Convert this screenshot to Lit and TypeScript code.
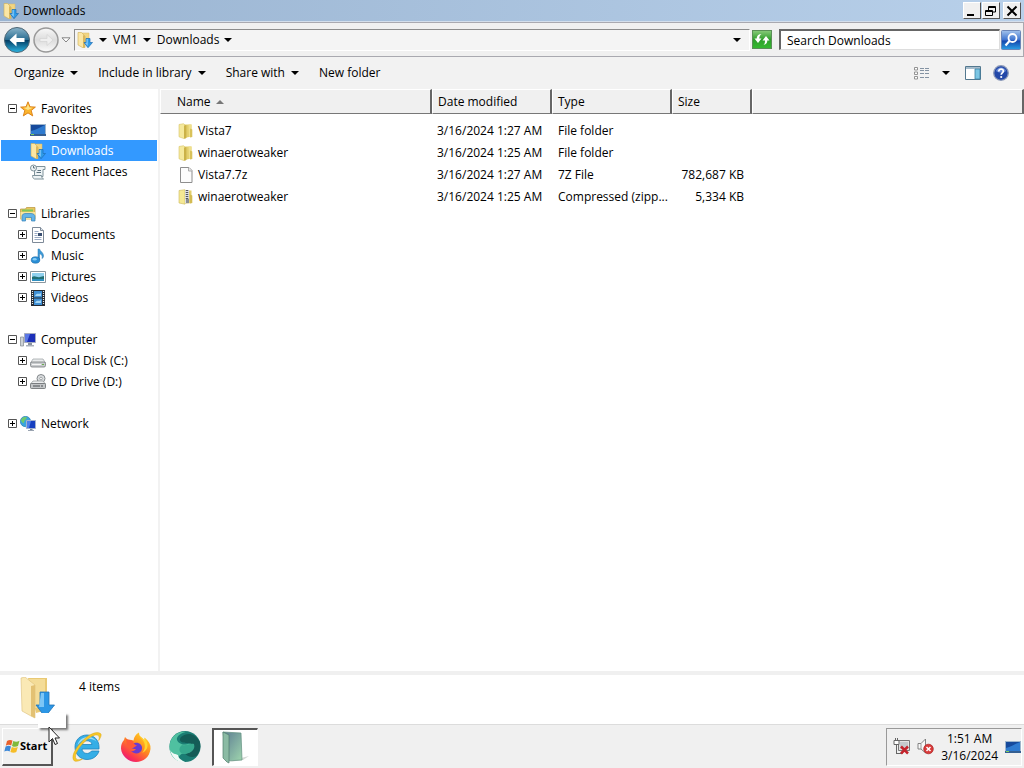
import { LitElement, html, css, svg, nothing } from "lit";
import { customElement, property } from "lit/decorators.js";
import { classMap } from "lit/directives/class-map.js";

const icons: Record<string, [number, number, unknown]> = {
  downloads: [16, 16, svg`
    <path d="M5 1h7v10H6z" fill="#f1d582" stroke="#d8b964" stroke-width=".5"/>
    <path d="M1 .5h3.500L8 4v11.500l-2 .3-5-2.800z" fill="#fbe6a4" stroke="#cfae55" stroke-width=".6"/>
    <path d="M6 3l2 1v11.500l-2 .3z" fill="#dbb75b"/>
    <path d="M9 6.500h4v4h2.500L11 15.700 7 10.500h2z" fill="#2f9be8" stroke="#1c6fb5" stroke-width=".7"/><path d="M9.500 7h1.300v7L8 11h1.500z" fill="#82c7f5"/>`],
  bigDownloads: [40, 44, svg`
    <path d="M8 1h19v32l-11 3z" fill="#e9c974"/><path d="M9 2h16v29H14z" fill="#f4dc97"/>
    <path d="M1 1l4-1 10 8v33l-4-2L2 34z" fill="#fae9b5" stroke="#dcc07a" stroke-width=".6"/>
    <path d="M11 9l4-1v33l-4-2z" fill="#e3c173"/>
    <path d="M20 15h9v13h5.500L25 40l-9-12h4z" fill="#2c97e6" stroke="#2473b5" stroke-width=".8"/>
    <path d="M21 16h3v14h-5z" fill="#7cc6f6"/>`],
  star: [16, 16, svg`<path d="M8 .8l2 5 5.400.300-4.200 3.400 1.500 5.400L8 11.900l-4.700 3 1.500-5.400L.6 6.100 6 5.800z" fill="#fbb52e" stroke="#d97c12" stroke-width=".9"/><path d="M8 3l1.300 3.500 3.500.2L8 9 3.500 6.700l3.200-.2z" fill="#fde48a"/>`],
  desktop: [16, 16, svg`<path d="M0 2h16v12H0z" fill="#9fb6cc"/><path d="M1 3h14v9H1z" fill="#164a9c"/><path d="M1 9c5-1 9-4 14-6v9H1z" fill="#2f7bd0"/><path d="M0 12h16v2H0z" fill="#355f92"/><path d="M1 12h3v1H1z" fill="#7fd25b"/>`],
  recent: [16, 16, svg`<g stroke="#7f929a" fill="#eef3f5"><path d="M4.500 2.500h10.500v3h-2v7h-8.500z"/><path d="M2.500 11.500h9c0 2 1 3 2 3.500h-9c-1.500-.5-2-2-2-3.500z"/><circle cx="3.500" cy="4" r="3"/></g><path d="M3.500 2v2H5M7.500 6.500H11M6.500 8.500H11" stroke="#5e7480" fill="none"/>`],
  libraries: [16, 16, svg`<path d="M.5 3h5l1-1.500h8.500V13H.5z" fill="#e8c75e" stroke="#b8943a" stroke-width=".7"/><path d="M2 3.500h11v2H2z" fill="#7fc65c"/><path d="M.5 6h15v7.500H.5z" fill="#f9e49c"/><path d="M2 15v-4.500C2 8 4 7.500 6 7.500h5c2 0 4 1 4 3V15h-3.500v-3.500h-6V15z" fill="#63b4e8" stroke="#3581b8" stroke-width=".7"/>`],
  document: [16, 16, svg`<path d="M2.500.5h8l3 3v12h-11z" fill="#fff" stroke="#7e8a98"/><path d="M10.500.5v3h3" fill="#dde4ec" stroke="#7e8a98"/><path d="M4.500 4.500h4M4.500 6.500h3M4.500 8.500h3M4.500 10.500h7M4.500 12.500h7" stroke="#9aabc4"/><path d="M8 6h4v3H8z" fill="#3a4f72"/>`],
  music: [16, 16, svg`<path d="M8 1h1.500c.5 2.500 4.500 3.500 4 7.500-.3 1-1 2-1.500 2 .8-2.500-.5-4-2.500-5V12H8z" fill="#3c9bd8" stroke="#2a74ac" stroke-width=".5"/><ellipse cx="5.500" cy="12" rx="4.300" ry="3.200" fill="#2a8fd6" stroke="#1b69a6" stroke-width=".6"/><ellipse cx="4.700" cy="11.200" rx="2" ry="1.200" fill="#85ccf5"/>`],
  picture: [16, 16, svg`<path d="M.5 2.500h15v11H.5z" fill="#fff" stroke="#8a979f"/><path d="M2 4h12v8H2z" fill="#8fd0ee"/><path d="M2 8c3-2 5 1 8 0l4-1v5H2z" fill="#1f6f74"/><path d="M2 10h12v2H2z" fill="#2f8fbf"/>`],
  video: [16, 16, svg`<path d="M1 0h14v16H1z" fill="#252b33"/><path d="M4 1h8v6.500H4zM4 8.500h8V15H4z" fill="#3f8fd4"/><path d="M5 6c2-4 3-1 6-3v3zM5 13c2-4 3-1 6-3v3z" fill="#a5d7f5"/><path d="M2.500 1v14M13.500 1v14" stroke="#e8edf2" stroke-width="1.200" stroke-dasharray="1 1"/>`],
  computer: [16, 16, svg`<path d="M.5 5h3v9h-3z" fill="#cdd2d6" stroke="#81898f" stroke-width=".7"/><path d="M4.500 1.500h11v9h-11z" fill="#1c2fb8" stroke="#a4abc0"/><path d="M5 2h5L7 10H5z" fill="#5b78e6"/><path d="M8 11h4v2H8z" fill="#8b93a0"/><path d="M6 13h8v1.500H6z" fill="#aab1bb"/>`],
  disk: [16, 16, svg`<path d="M3 6h10l2.500 4H.5z" fill="#e9ebec" stroke="#9a9ea1" stroke-width=".7"/><rect x=".5" y="9" width="15" height="5" rx="1.500" fill="#c8cbcd" stroke="#75797c" stroke-width=".8"/><path d="M2 11.500h9" stroke="#f6f6f6"/><path d="M12 11h2v1h-2z" fill="#69ad4d"/>`],
  cd: [16, 16, svg`<circle cx="11" cy="4.500" r="4" fill="#dadddf" stroke="#83888b"/><circle cx="11" cy="4.500" r="1.300" fill="#fff" stroke="#83888b" stroke-width=".7"/><path d="M3 7h10l2.500 3H.5z" fill="#eceeef" stroke="#8c9093" stroke-width=".7"/><rect x=".5" y="9.500" width="15" height="5" rx="1" fill="#c3c6c8" stroke="#66696c" stroke-width=".8"/><path d="M3 12h7M11 12h2" stroke="#4d5154"/>`],
  network: [16, 16, svg`<circle cx="5.500" cy="5.500" r="5.200" fill="#3ba4dc" stroke="#2176a9" stroke-width=".6"/><path d="M1 4c2-4 5-3 6-2.500C6 4 4 4 4 7 2.500 7 1.500 6 1 4z" fill="#6fcb6b"/><path d="M6.500 4.500h9v8h-9z" fill="#163fc0" stroke="#a4b1cf"/><path d="M7 5h4l-2 7H7z" fill="#4d7eea"/><path d="M10 13h2.500v2H10z" fill="#7c8796"/><path d="M8 14.500h6" stroke="#9aa4b1"/>`],
  folder: [16, 16, svg`<path d="M5 1.500h8.500v12L6 15z" fill="#e3cf6c"/><path d="M10.500 1.500h3v12l-2.500.5z" fill="#efe08c"/><path d="M1 1.500l4.500-.8L8 3v12l-2 .6-5-1.800z" fill="#f5e99c" stroke="#d6c468" stroke-width=".6"/><path d="M6 2.500L8.300 2v13L6 15.500z" fill="#cbb248"/><path d="M12 5.500l2.300 1v7.500L12 14.500z" fill="#d9c25a"/>`],
  file: [16, 16, svg`<path d="M2.500.5h8.500l3 3v12h-11.500z" fill="#fcfcfc" stroke="#8e8e8e"/><path d="M10.500.5v3.500h3.500" fill="#e8e8e8" stroke="#9c9c9c" stroke-width=".8"/>`],
  zip: [16, 16, svg`<path d="M6 1.500h7.500V14L7 15z" fill="#e3cf6c"/><path d="M1 1.500l6-.8v14.500l-6-1.200z" fill="#f5e994" stroke="#cdb95a" stroke-width=".6"/><path d="M7 1h4v13.500H7z" fill="#dedfe2"/><path d="M9 1v9" stroke="#55585e" stroke-width="2.500" stroke-dasharray="1 1"/><path d="M8 10h3v4H8z" fill="#8a8d92"/><path d="M12 5.500l2.300 1v7.500L12 14.500z" fill="#d3bb52"/>`],
  back: [28, 28, svg`<defs><linearGradient id="b" x1="0" y1="0" x2="0" y2="1"><stop offset="0" stop-color="#8ab4ca"/><stop offset=".48" stop-color="#2b6e92"/><stop offset=".52" stop-color="#053f66"/><stop offset="1" stop-color="#2bb6e4"/></linearGradient></defs><circle cx="14" cy="14" r="12.500" fill="url(#b)" stroke="#4d6675"/><path d="M6.500 14l7-6.500v4.500h8v4h-8v4.500z" fill="#fff"/>`],
  forward: [28, 28, svg`<defs><linearGradient id="f" x1="0" y1="0" x2="0" y2="1"><stop offset="0" stop-color="#f8f8f8"/><stop offset=".5" stop-color="#dcdcdc"/><stop offset="1" stop-color="#fbfbfb"/></linearGradient></defs><circle cx="14" cy="14" r="12" fill="url(#f)" stroke="#999" stroke-width="1.500"/><path d="M21 14l-6-5.500v4H8v3h7v4z" fill="#efefef" stroke="#d2d2d2" stroke-width=".7"/>`],
  chevron: [10, 6, svg`<path d="M1 .8h8L5 5z" fill="#fff" stroke="#777" stroke-width=".9"/>`],
  refresh: [20, 19, svg`<defs><linearGradient id="r" x1="0" y1="0" x2="0" y2="1"><stop offset="0" stop-color="#8acb7c"/><stop offset=".5" stop-color="#2f9e2c"/><stop offset="1" stop-color="#35bb30"/></linearGradient></defs><rect x=".5" y=".5" width="19" height="18" fill="url(#r)" stroke="#5b8f58"/><path d="M2.500 8.500L6 13l3.500-4.500H7.300C7.300 6.500 8 5 9.500 4 6.500 4 4.700 6 4.700 8.500z" fill="#fff"/><path d="M10.500 10.500L14 6l3.500 4.500h-2.200c0 2-.8 4-3.800 4.500 1.200-1 1.500-2.500 1.500-4.500z" fill="#fff"/>`],
  search: [20, 20, svg`<defs><linearGradient id="s" x1="0" y1="0" x2="0" y2="1"><stop offset="0" stop-color="#a4c4ec"/><stop offset=".5" stop-color="#3b72cf"/><stop offset=".55" stop-color="#1646ad"/><stop offset="1" stop-color="#2ba0e6"/></linearGradient></defs><rect x=".5" y=".5" width="19" height="19" rx="1" fill="url(#s)" stroke="#6b86b8"/><circle cx="11.500" cy="8" r="4" fill="none" stroke="#fff" stroke-width="1.800"/><path d="M8.500 11L4.500 15.500" stroke="#fff" stroke-width="2.200"/>`],
  views: [16, 13, svg`<path d="M.5.5h3v2.500h-3zM.5 5h3v2.500h-3zM.5 9.500h3V12h-3z" fill="#fff" stroke="#888" stroke-width=".9"/><path d="M6 1.500h10M6 3.500h10M6 6.500h10M6 10.500h10" stroke="#8493a3" stroke-dasharray="4 1"/>`],
  preview: [16, 14, svg`<path d="M.5.5h15v13H.5z" fill="#fff" stroke="#54788f"/><path d="M1 2h14" stroke="#a6bccb" stroke-width="2"/><path d="M10 3h5v10h-5z" fill="#7cc6e4" stroke="#3b82a3" stroke-width=".8"/>`],
  help: [16, 16, svg`<circle cx="8" cy="8" r="7.300" fill="#2348a8" stroke="#8b99b8" stroke-width="1.300"/><path d="M3 6a5.300 5.300 0 0 1 10 0c-3 2-7 2-10 0z" fill="#6a8cd8"/><path d="M5.800 6.500C5.800 3.200 10.600 3.500 10.300 6.300 10.100 7.800 8.200 7.900 8.200 9.700" fill="none" stroke="#fff" stroke-width="1.700"/><circle cx="8.200" cy="12" r="1.100" fill="#fff"/>`],
  flag: [16, 16, svg`<path d="M3 3c2-1.500 4-1.300 5.500-.4L7.200 7.500C5.700 6.500 3.700 6.500 1.800 7.700z" fill="#e8612c"/><path d="M9.300 3c2 1.200 4.200 1 6.200-.2L14 8c-1.900 1-4 1-6-.1z" fill="#80b93c"/><path d="M1.600 8.600c1.800-1.200 3.800-1.200 5.400-.2l-1.400 5c-1.500-1-3.500-1-5.300.2z" fill="#3d89d8"/><path d="M7.800 8.900c2 1 4 1 6 0l-1.500 5.200c-1.800 1-4 .9-5.900-.1z" fill="#f6bd28"/>`],
  ie: [32, 32, svg`<path fill-rule="evenodd" d="M16 4c7 0 12 5 12 12v2H11c.3 5 7 6 9.500 2H28c-1.500 5-6 8.500-12 8.500C9 28.500 4 23 4 16S9 4 16 4zM11 13.500h10c-.5-5-9.500-5-10 0z" fill="#35aee6" stroke="#1f84bd" stroke-width=".8"/><path d="M6.500 14C8 8 13 6 17 6c4 0 7 2 8.500 4.500C20 6 12 7 6.500 14z" fill="#9cdcf7"/><path d="M29.500 2.500c-4-2.500-11 .5-17 6.500C6 15 0 24 2.500 29c1.500 2.500 6 1 9-1-4 1.500-6.500.8-7-1.500-.6-4 4-11 9.500-16 5-5 10.500-7.500 13-6.200 1.500.8 1.500 2.700.7 5.200 2-3 3.300-6 1.800-7z" fill="#f7c828" stroke="#d9a312" stroke-width=".5"/>`],
  firefox: [32, 32, svg`<defs><linearGradient id="x" x1=".9" y1="0" x2=".2" y2="1"><stop offset="0" stop-color="#ffe226"/><stop offset=".45" stop-color="#ff8c1f"/><stop offset=".8" stop-color="#fb3550"/><stop offset="1" stop-color="#e31587"/></linearGradient></defs><path d="M4 9l1-3 3 3c2-.5 4 0 5.500.5C14 6 15.500 3.500 19 1.500c0 3 1 4 3 5.500 1.500 1 2 2 2.500 3V6.500C29 10 31 14 30.500 18 29.500 26 23.500 31 16 31S1.500 25 1 17.500C.9 14 2 11 4 9z" fill="url(#x)"/><path d="M12 13.500c4-4 11-1 10 4.500-1 5-7.500 6-11 2 2 .5 4-.5 5-2-3 .5-5-1-6.500-2.500z" fill="#6a3bd0"/><path d="M6 8c3 1 5 1 7.500 2.500-.5 2 1.500 3.500 3.500 4l-4 2.500c-3 1-4 0-6-2z" fill="#ff5a38"/><path d="M19 2c0 4 3 5 5 9 2 5 0 9-2 11 7-3 7-10 2.500-15v3C23 6 19 6 19 2z" fill="#ffd62e"/>`],
  edge: [34, 34, svg`<circle cx="17" cy="16.500" r="15.500" fill="#1b7d74"/><path d="M13 7c6-5 14-4 18.500 4 2 5 .5 11-3 15-4 2-9 1-12-3 5 0 9-3 8-8-2-3-8-1-11-3-2-1-2-3-.5-5z" fill="#145c57"/><path d="M9 10c-1-3 3-7 9-8C9 .5 1.500 8 1.500 17c0 7 4 12 9 14-1-3 0-5 3-7 7 0 13-3 12-9-4-3-8 1-12-1-2-1-4-2-4.500-4z" fill="#4fc0a0"/><path d="M14 15c5 1 8-2 12-1 2 6-4 10-11 10-4-1-5-6-1-9z" fill="#36a88e"/><path d="M2 20c2 4 6 4 8 5 0 3 3 5 8 7.500C10 33 4 28 2 20z" fill="#f1faf7"/>`],
  explorer: [28, 34, svg`<defs><linearGradient id="e" x1="0" y1="0" x2="1" y2="1"><stop offset="0" stop-color="#5c7c92"/><stop offset="1" stop-color="#9fd5ae"/></linearGradient></defs><path d="M20 28l8-2-6 4-14 2z" fill="#d5dbd6"/><path d="M2 2l18 1 1 27-16 1z" fill="url(#e)" stroke="#62917f" stroke-width=".7"/><path d="M2 2l6 3v28l-2-1-4-4z" fill="#8bbba4" stroke="#52806f" stroke-width=".7"/>`],
  netError: [17, 17, svg`<path d="M5.500 2.500h11v10h-11z" fill="#e4e4e4" stroke="#777"/><path d="M7 4h8v7H7z" fill="#c5cacd"/><path d="M1 2.500h5v4H1zM2.500 0v3M4.500 0v3M3.500 7v9M3.500 15.500h6" stroke="#666" fill="#fff"/><path d="M8 8.500l7 7M15 8.500l-7 7" stroke="#c4232c" stroke-width="2.500"/>`],
  muted: [17, 17, svg`<path d="M1 5.500h3l4.500-4.500v14L4 11H1z" fill="#f8f8f8" stroke="#777" stroke-width=".9"/><path d="M4 5.500V11" stroke="#999"/><circle cx="11.500" cy="11" r="4.800" fill="#d83a3a" stroke="#a82424" stroke-width=".7"/><path d="M9.500 9l4 4M13.500 9l-4 4" stroke="#fff" stroke-width="1.500"/>`],
  pointer: [12, 20, svg`<path d="M1 1v15l3.500-3.500L7 18.500l2.500-1L7 12h4.500z" fill="#fff" stroke="#222"/>`],
  minimize: [12, 12, svg`<path d="M1 9h7v2H1z"/>`],
  restore: [12, 12, svg`<path fill="none" stroke="#000" d="M3.500 5V1.500h7V7H8M3 2.500h8M.5 5.500h7v5h-7zM0 6.500h8"/>`],
  close: [12, 12, svg`<path d="M1.500 1.500l9 9M10.500 1.500l-9 9" stroke="#000" stroke-width="2"/>`],
};

function icon(name: string) {
  const [w, h, body] = icons[name];
  return html`<svg width=${w} height=${h} viewBox="0 0 ${w} ${h}" aria-hidden="true">${body}</svg>`;
}

const shared = css`
  * { box-sizing: border-box; }
  svg { display: block; flex: none; }
  button { font: inherit; color: inherit; background: none; border: 0; padding: 0; display: flex; align-items: center; }
  a { color: inherit; text-decoration: none; }
  .caret { flex: none; width: 0; height: 0; border: 4px solid transparent; border-top-color: #000; border-bottom: 0; }
`;

@customElement("title-bar")
class TitleBar extends LitElement {
  static styles = [shared, css`
    :host { display: flex; align-items: center; height: 22px; padding: 0 3px; background: linear-gradient(90deg, #9ab4d1, #b8d0ea); border-bottom: 1px solid #d4dfec; }
    .name { flex: 1; margin-left: 4px; }
    .box { width: 18px; height: 17px; justify-content: center; background: #f0f0f0; border: 1px solid; border-color: #fff #555 #555 #fff; margin-left: 1px; }
    .last { margin-left: 3px; }
  `];
  render() {
    return html`${icon("downloads")}<span class="name">Downloads</span>
      <button class="box" aria-label="Minimize">${icon("minimize")}</button>
      <button class="box" aria-label="Restore">${icon("restore")}</button>
      <button class="box last" aria-label="Close">${icon("close")}</button>`;
  }
}

@customElement("nav-bar")
class NavBar extends LitElement {
  static styles = [shared, css`
    :host { display: flex; align-items: center; height: 35px; padding: 0 2px 0 3px; border: 1px solid #a9a9b0; border-width: 1px 1px 1px 0; background: #f0f0f0; }
    .round { margin-right: 1px; }
    .address { display: flex; align-items: center; flex: 1; height: 22px; gap: 6px; margin-left: 3px; padding: 0 8px 0 2px; border: 1px solid #8c8c8c; border-color: #8c8c8c #fff #fff #8c8c8c; background: #f4f4f4; }
    .grow { flex: 1; }
    .refresh { margin: 0 7px 0 2px; }
    .query { width: 221px; height: 21px; padding: 0 6px; margin-right: 1px; font: inherit; color: #000; background: #fff; border: 1px solid; border-color: #666 #ddd #ddd #666; border-width: 2px 1px 1px 2px; border-radius: 0; outline: 0; }
    .query::placeholder { color: #000; opacity: 1; }
    .crumb { display: flex; align-items: center; gap: 5px; }
  `];
  render() {
    return html`
      <button class="round" aria-label="Back">${icon("back")}</button>
      <button class="round" aria-label="Forward">${icon("forward")}</button>
      <button aria-label="Recent pages">${icon("chevron")}</button>
      <div class="address">${icon("downloads")}
        <span class="crumb"><span class="caret"></span></span>
        <a class="crumb" href="#vm1">VM1 <span class="caret"></span></a>
        <a class="crumb" href="#downloads">Downloads <span class="caret"></span></a>
        <span class="grow"></span>
        <button aria-label="Previous locations"><span class="caret"></span></button>
      </div>
      <button class="refresh" aria-label="Refresh">${icon("refresh")}</button>
      <input class="query" type="search" aria-label="Search Downloads" placeholder="Search Downloads">
      <button aria-label="Search">${icon("search")}</button>`;
  }
}

@customElement("command-bar")
class CommandBar extends LitElement {
  static styles = [shared, css`
    :host { display: flex; align-items: center; height: 32px; padding: 0 15px 0 14px; background: #f2f2f2; gap: 20px; }
    .menu { gap: 6px; }
    .grow { flex: 1; }
    .tools { display: flex; align-items: center; gap: 12px; }
    .more { margin-right: 3px; }
  `];
  render() {
    return html`
      ${["Organize", "Include in library", "Share with"].map((t) => html`<button class="menu">${t}<span class="caret"></span></button>`)}
      <button>New folder</button><span class="grow"></span>
      <div class="tools">
        <button aria-label="Change view">${icon("views")}</button>
        <button class="more" aria-label="More views"><span class="caret"></span></button>
        <button aria-label="Preview pane">${icon("preview")}</button>
        <button aria-label="Help">${icon("help")}</button>
      </div>`;
  }
}

interface Node { label: string; icon: string; mark?: "plus" | "minus"; active?: boolean; children?: Node[]; }
const tree: Node[] = [
  { label: "Favorites", icon: "star", mark: "minus", children: [
    { label: "Desktop", icon: "desktop" }, { label: "Downloads", icon: "downloads", active: true }, { label: "Recent Places", icon: "recent" }] },
  { label: "Libraries", icon: "libraries", mark: "minus", children: [
    { label: "Documents", icon: "document", mark: "plus" }, { label: "Music", icon: "music", mark: "plus" },
    { label: "Pictures", icon: "picture", mark: "plus" }, { label: "Videos", icon: "video", mark: "plus" }] },
  { label: "Computer", icon: "computer", mark: "minus", children: [
    { label: "Local Disk (C:)", icon: "disk", mark: "plus" }, { label: "CD Drive (D:)", icon: "cd", mark: "plus" }] },
  { label: "Network", icon: "network", mark: "plus" },
];

@customElement("folder-tree")
class FolderTree extends LitElement {
  static styles = [shared, css`
    :host { display: block; width: 160px; flex: none; padding: 9px 1px 0; background: #fff; border-right: 2px solid #f2f2f2; }
    .list { list-style: none; margin: 0; padding: 0; }
    .group { margin-bottom: 21px; }
    .row { display: flex; align-items: center; height: 21px; padding-left: 7px; }
    .child { padding-left: 17px; }
    .active { background: #3399ff; color: #fff; }
    .mark { width: 9px; height: 9px; margin-right: 3px; flex: none; }
    .link { display: flex; align-items: center; gap: 5px; white-space: nowrap; }
  `];
  row(n: Node, child: boolean) {
    return html`<div class=${classMap({ row: true, child, active: !!n.active })}>
      ${n.mark
        ? html`<button class="mark" aria-label="Toggle ${n.label}"><svg width="9" height="9" viewBox="0 0 9 9"><path d="M.5.5h8v8h-8z" fill="#fff" stroke="#555"/><path d=${n.mark === "plus" ? "M2 4.500h5M4.500 2v5" : "M2 4.500h5"} stroke="#000"/></svg></button>`
        : html`<span class="mark"></span>`}
      <a class="link" href="#${n.icon}">${icon(n.icon)}${n.label}</a></div>`;
  }
  render() {
    return html`<nav aria-label="Folders"><ul class="list">${tree.map((g) => html`<li class="group">${this.row(g, false)}
      ${g.children ? html`<ul class="list">${g.children.map((c) => html`<li>${this.row(c, true)}</li>`)}</ul>` : nothing}</li>`)}</ul></nav>`;
  }
}

const files = [
  ["folder", "Vista7", "3/16/2024 1:27 AM", "File folder", ""],
  ["folder", "winaerotweaker", "3/16/2024 1:25 AM", "File folder", ""],
  ["file", "Vista7.7z", "3/16/2024 1:27 AM", "7Z File", "782,687 KB"],
  ["zip", "winaerotweaker", "3/16/2024 1:25 AM", "Compressed (zipp...", "5,334 KB"],
];

@customElement("file-list")
class FileList extends LitElement {
  static styles = [shared, css`
    :host { display: block; flex: 1; min-width: 0; background: #fff; }
    .table { width: 100%; table-layout: fixed; border-collapse: separate; border-spacing: 0; }
    .name { width: 272px; } .mid { width: 120px; } .size { width: 80px; }
    th { height: 25px; padding: 0 5px; text-align: left; font-weight: 400; background: #f0f0f0; border: 1px solid; border-color: #fff #666 #777 #fff; border-right-width: 2px; }
    th:first-child { padding-left: 16px; }
    .sort { display: inline-block; margin-left: 5px; vertical-align: middle; border: 4px solid transparent; border-top: 0; border-bottom-color: #777; }
    .body::before { content: ""; display: block; height: 6px; }
    td { height: 22px; padding: 0 0 0 6px; white-space: nowrap; }
    td:first-child { padding-left: 18px; }
    td:nth-child(2) { padding-left: 5px; }
    .entry { display: flex; align-items: center; gap: 4px; }
    td.num { text-align: right; padding: 0 8px 0 0; }
  `];
  render() {
    return html`<table class="table">
      <colgroup><col class="name"><col class="mid"><col class="mid"><col class="size"><col></colgroup>
      <thead><tr><th>Name<span class="sort"></span></th><th>Date modified</th><th>Type</th><th>Size</th><th></th></tr></thead>
      <tbody class="body">${files.map(([i, n, d, t, s]) => html`<tr>
        <td><span class="entry">${icon(i)}${n}</span></td><td>${d}</td><td>${t}</td><td class="num">${s}</td><td></td></tr>`)}</tbody>
    </table>`;
  }
}

@customElement("task-bar")
class TaskBar extends LitElement {
  static styles = [shared, css`
    :host { display: flex; align-items: center; height: 44px; padding: 0 2px; background: #f0f0f0; border-top: 1px solid #dcdcdc; }
    .start { width: 51px; height: 38px; padding-left: 1px; font-size: 11px; font-weight: 700; border: 1px solid; border-color: #fff #555 #555 #fff; border-width: 1px 2px 2px 1px; }
    .app { width: 46px; height: 38px; justify-content: center; margin-left: 3px; }
    .first { margin-left: 11px; }
    .open { margin-left: 4px; background: #fff; border: 1px solid; border-color: #555 #fff #fff #555; border-width: 2px 1px 1px 2px; padding-right: 2px; }
    .grow { flex: 1; }
    .tray { display: flex; align-items: center; gap: 7px; height: 38px; padding: 0 0 0 6px; border: 1px solid; border-color: #999 #fff #fff #999; }
    .clock { text-align: center; line-height: 17px; }
  `];
  render() {
    return html`
      <button class="start">${icon("flag")}Start</button>
      <button class="app first" aria-label="Internet Explorer">${icon("ie")}</button>
      <button class="app" aria-label="Firefox">${icon("firefox")}</button>
      <button class="app" aria-label="Browser">${icon("edge")}</button>
      <button class="app open" aria-label="Downloads window">${icon("explorer")}</button>
      <span class="grow"></span>
      <div class="tray">
        <button aria-label="Network">${icon("netError")}</button>
        <button aria-label="Volume">${icon("muted")}</button>
        <div class="clock">1:51 AM<br>3/16/2024</div>
        <button aria-label="Show desktop">${icon("desktop")}</button>
      </div>`;
  }
}

@customElement("app-root")
class AppRoot extends LitElement {
  @property() status = "4 items";
  static styles = [shared, css`
    :host { display: flex; flex-direction: column; position: relative; height: 100vh; overflow: hidden; font: 12px/16px "Open Sans", "Noto Sans", sans-serif; color: #000; background: #f0f0f0; }
    .main { display: flex; flex: 1; min-height: 0; }
    .details { display: flex; align-items: flex-start; height: 53px; padding: 2px 0 0 20px; gap: 19px; background: #fff; border-top: 4px solid #f0f0f0; }
    .count { padding-top: 2px; }
    .tip { position: absolute; left: 38px; bottom: 40px; width: 28px; height: 15px; background: #fff; box-shadow: 2px 2px 2px #777; }
    .cursor { position: absolute; left: 48px; bottom: 22px; }
  `];
  render() {
    return html`<title-bar></title-bar><nav-bar></nav-bar><command-bar></command-bar>
      <div class="main"><folder-tree></folder-tree><file-list></file-list></div>
      <div class="details">${icon("bigDownloads")}<span class="count">${this.status}</span></div>
      <task-bar></task-bar>
      <div class="tip"></div><div class="cursor">${icon("pointer")}</div>`;
  }
}
